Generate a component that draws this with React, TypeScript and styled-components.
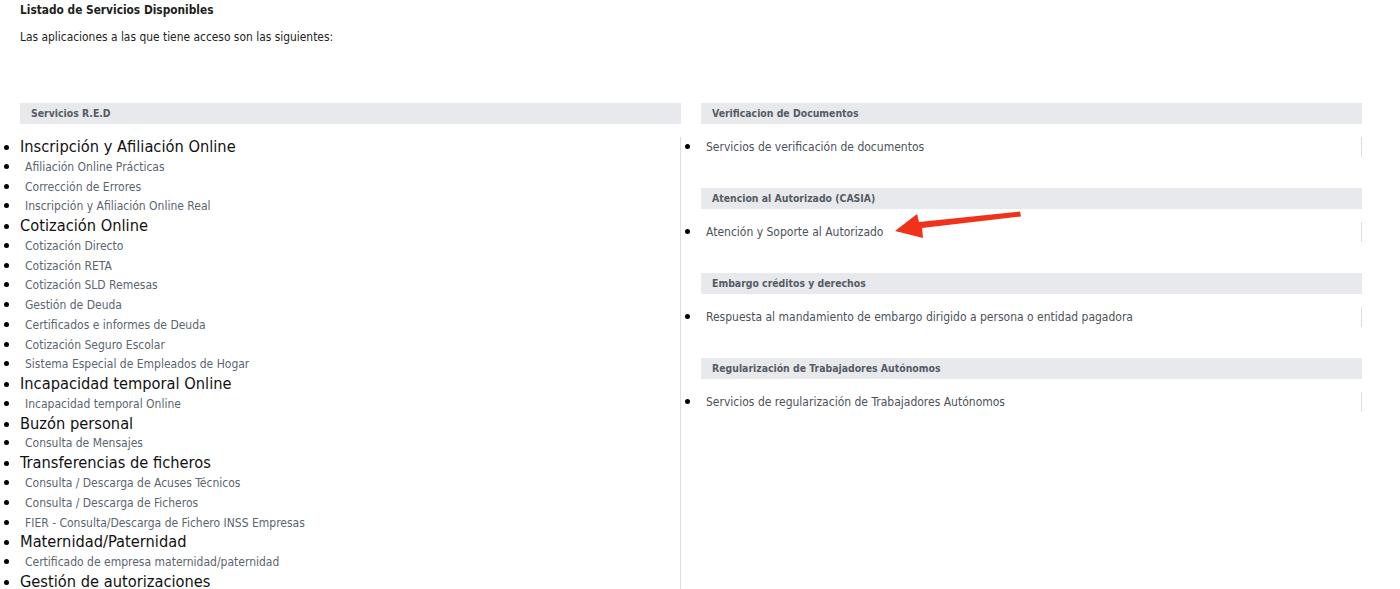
import React from 'react';
import styled, { createGlobalStyle } from 'styled-components';

const GlobalStyle = createGlobalStyle`
  html, body {
    margin: 0;
    padding: 0;
    background: #ffffff;
  }
  body {
    font-family: "DejaVu Sans Condensed", "DejaVu Sans", Tahoma, sans-serif;
    color: #222;
  }
`;

interface Group {
  title: string;
  items: string[];
}

const redGroups: Group[] = [
  {
    title: 'Inscripción y Afiliación Online',
    items: ['Afiliación Online Prácticas', 'Corrección de Errores', 'Inscripción y Afiliación Online Real'],
  },
  {
    title: 'Cotización Online',
    items: [
      'Cotización Directo',
      'Cotización RETA',
      'Cotización SLD Remesas',
      'Gestión de Deuda',
      'Certificados e informes de Deuda',
      'Cotización Seguro Escolar',
      'Sistema Especial de Empleados de Hogar',
    ],
  },
  { title: 'Incapacidad temporal Online', items: ['Incapacidad temporal Online'] },
  { title: 'Buzón personal', items: ['Consulta de Mensajes'] },
  {
    title: 'Transferencias de ficheros',
    items: [
      'Consulta / Descarga de Acuses Técnicos',
      'Consulta / Descarga de Ficheros',
      'FIER - Consulta/Descarga de Fichero INSS Empresas',
    ],
  },
  { title: 'Maternidad/Paternidad', items: ['Certificado de empresa maternidad/paternidad'] },
  { title: 'Gestión de autorizaciones', items: [] },
];

const sideSections: Group[] = [
  { title: 'Verificacion de Documentos', items: ['Servicios de verificación de documentos'] },
  { title: 'Atencion al Autorizado (CASIA)', items: ['Atención y Soporte al Autorizado'] },
  { title: 'Embargo créditos y derechos', items: ['Respuesta al mandamiento de embargo dirigido a persona o entidad pagadora'] },
  { title: 'Regularización de Trabajadores Autónomos', items: ['Servicios de regularización de Trabajadores Autónomos'] },
];

const App: React.FC = () => {
  return (
    <Page>
      <GlobalStyle />
      <Intro>
        <Title>Listado de Servicios Disponibles</Title>
        <Lead>Las aplicaciones a las que tiene acceso son las siguientes:</Lead>
      </Intro>
      <Columns>
        <Column>
          <SectionHeader>Servicios R.E.D</SectionHeader>
          <ServiceList $tall>
            {redGroups.map((group) => (
              <React.Fragment key={group.title}>
                <GroupItem>{group.title}</GroupItem>
                {group.items.map((item, i) => (
                  <LinkItem key={group.title + i}>
                    <ServiceLink href="#">{item}</ServiceLink>
                  </LinkItem>
                ))}
              </React.Fragment>
            ))}
          </ServiceList>
        </Column>
        <Column>
          {sideSections.map((section) => (
            <Section key={section.title}>
              <SectionHeader>{section.title}</SectionHeader>
              <ServiceList>
                {section.items.map((item) => (
                  <LinkItem key={item}>
                    <ServiceLink href="#" $dark>{item}</ServiceLink>
                  </LinkItem>
                ))}
              </ServiceList>
            </Section>
          ))}
        </Column>
      </Columns>
      <Arrow viewBox="0 0 130 30" width="130" height="30">
        <polygon points="125,0.5 126,5.5 27,17 28,27 0,20 22,3 24,11" fill="#f0321a" />
      </Arrow>
    </Page>
  );
};

// Styled components
const Page = styled.div`
  position: relative;
  width: 1400px;
  min-height: 589px;
  overflow: hidden;
`;

const Intro = styled.div`
  padding: 2px 0 0 20px;
`;

const Title = styled.h1`
  margin: 0;
  font-size: 11.8px;
  line-height: 16px;
  font-weight: bold;
  color: #1e1e1e;
`;

const Lead = styled.p`
  margin: 11px 0 0;
  font-size: 11.9px;
  line-height: 16px;
  color: #222;
`;

const Columns = styled.div`
  display: grid;
  grid-template-columns: 661px 661px;
  column-gap: 20px;
  margin: 58px 0 0 20px;
`;

const Column = styled.div`
  display: flex;
  flex-direction: column;
`;

const Section = styled.div`
  margin-bottom: 31px;
`;

const SectionHeader = styled.div`
  height: 21px;
  line-height: 21px;
  padding-left: 11px;
  background: #e8e9ec;
  font-size: 10.4px;
  font-weight: bold;
  color: #545b63;
`;

const ServiceList = styled.ul<{ $tall?: boolean }>`
  margin: 13px 0 0;
  padding: 0;
  list-style: disc outside;
  border-right: 1px solid #dcdde0;
  min-height: ${(p) => (p.$tall ? '480px' : '20px')};

  li::marker {
    font-size: 15px;
    color: #000;
  }
`;

const GroupItem = styled.li`
  height: 19.77px;
  font-size: 16.3px;
  line-height: 19.77px;
  color: #111;
`;

const LinkItem = styled.li`
  height: 19.77px;
  font-size: 12px;
  line-height: 19.77px;
  color: #000;
`;

const ServiceLink = styled.a<{ $dark?: boolean }>`
  padding-left: 5px;
  color: ${(p) => (p.$dark ? '#4b5259' : '#5b6570')};
  text-decoration: none;
`;

const Arrow = styled.svg`
  position: absolute;
  left: 895px;
  top: 211px;
`;

export default App;
